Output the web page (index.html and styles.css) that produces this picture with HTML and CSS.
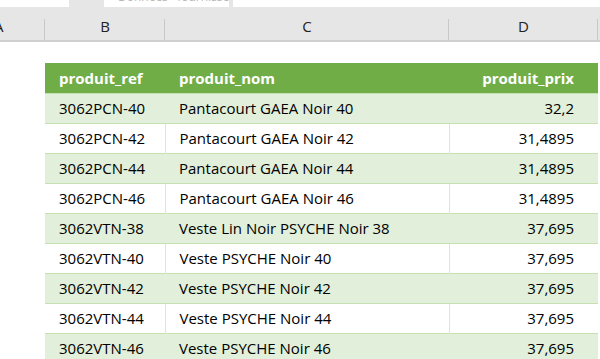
FILE: index.html
```html
<!DOCTYPE html>
<html lang="fr">
<head>
<meta charset="utf-8">
<title>Tableau produits</title>
<link rel="stylesheet" href="styles.css">
</head>
<body>
<div class="tabs">
  <div class="tab tab-white tab-first"></div>
  <div class="tab tab-gray"><span class="tab-mark">–</span></div>
  <div class="tab tab-white tab-doc"><span class="tab-text">Données · fournisseurs · Pantag</span></div>
  <div class="tab tab-gray tab-gap"></div>
  <div class="tab tab-white tab-rest"></div>
</div>
<div class="colheads">
  <div class="colhead colhead-first"><span class="colhead-a">A</span></div>
  <div class="colhead">B</div>
  <div class="colhead">C</div>
  <div class="colhead">D</div>
  <div class="colhead colhead-last"></div>
</div>
<div class="sheet">
  <div class="spacer"></div>
  <table class="data">
    <thead>
      <tr><th class="c-ref">produit_ref</th><th class="c-nom">produit_nom</th><th class="c-prix">produit_prix</th></tr>
    </thead>
    <tbody>
      <tr><td>3062PCN-40</td><td>Pantacourt GAEA Noir 40</td><td class="num">32,2</td></tr>
      <tr><td>3062PCN-42</td><td>Pantacourt GAEA Noir 42</td><td class="num">31,4895</td></tr>
      <tr><td>3062PCN-44</td><td>Pantacourt GAEA Noir 44</td><td class="num">31,4895</td></tr>
      <tr><td>3062PCN-46</td><td>Pantacourt GAEA Noir 46</td><td class="num">31,4895</td></tr>
      <tr><td>3062VTN-38</td><td>Veste Lin Noir PSYCHE Noir 38</td><td class="num">37,695</td></tr>
      <tr><td>3062VTN-40</td><td>Veste PSYCHE Noir 40</td><td class="num">37,695</td></tr>
      <tr><td>3062VTN-42</td><td>Veste PSYCHE Noir 42</td><td class="num">37,695</td></tr>
      <tr><td>3062VTN-44</td><td>Veste PSYCHE Noir 44</td><td class="num">37,695</td></tr>
      <tr><td>3062VTN-46</td><td>Veste PSYCHE Noir 46</td><td class="num">37,695</td></tr>
    </tbody>
  </table>
</div>
</body>
</html>
```
FILE: styles.css
```css
html, body {
  margin: 0;
  padding: 0;
  background: #ffffff;
  overflow: hidden;
}
body {
  width: 600px;
  height: 359px;
  font-family: "Open Sans", "Liberation Sans", Arial, sans-serif;
  color: #000;
}
.tabs {
  display: flex;
  height: 7px;
  background: #e6e6e6;
  overflow: hidden;
}
.tab { height: 7px; position: relative; overflow: hidden; }
.tab-white { background: #ffffff; }
.tab-gray { background: #e6e6e6; }
.tab-first { width: 69px; }
.tab-gray:nth-child(2) { width: 35px; }
.tab-doc { width: 125px; }
.tab-gap { width: 4px; }
.tab-rest { flex: 1; }
.tab-mark {
  position: absolute;
  left: 13px;
  top: -10px;
  font-size: 12px;
  color: #999;
}
.tab-text {
  position: absolute;
  left: 14px;
  top: -12px;
  font-size: 12px;
  color: #b8b8b8;
  white-space: nowrap;
}
.colheads {
  display: grid;
  grid-template-columns: 45px 120px 284px 149px 1fr;
  height: 33px;
  background: #e6e6e6;
  border-bottom: 2px solid #d0d0d0;
  box-sizing: content-box;
}
.colhead {
  position: relative;
  display: flex;
  align-items: flex-end;
  justify-content: center;
  padding-bottom: 4px;
  font-family: "Open Sans", "Liberation Sans", sans-serif;
  font-size: 15px;
  color: #222;
}
.colhead-first { justify-content: flex-start; overflow: hidden; }
.colhead-a { margin-left: -6px; }
.colhead::after {
  content: "";
  position: absolute;
  right: 0;
  top: 12px;
  bottom: 0;
  width: 1px;
  background: #c8c8c8;
}
.colhead-last::after { display: none; }
.sheet {
  padding-left: 45px;
}
.spacer { height: 21px; }
.data {
  border-collapse: collapse;
  table-layout: fixed;
  width: 553px;
  font-size: 15px;
}
.data th, .data td {
  height: 30px;
  padding: 0 0 0 14px;
  box-sizing: border-box;
  text-align: left;
  white-space: nowrap;
  overflow: hidden;
}
.data .c-ref { width: 120px; }
.data .c-nom { width: 284px; }
.data .c-prix { width: 149px; }
.data thead tr {
  background: #70ad47;
}
.data th {
  color: #ffffff;
  font-weight: 700;
  height: 30px;
}
.data th.c-prix, .data td.num {
  text-align: right;
  padding: 0 24px 0 0;
}
.data tbody tr:nth-child(odd) { background: #e2efda; }
.data tbody tr:nth-child(even) { background: #ffffff; }
.data tbody td {
  border-top: 1px solid #c6e0b4;
}
.data tbody tr:nth-child(even) td + td {
  border-left: 1px solid #e2e2e2;
}
```
